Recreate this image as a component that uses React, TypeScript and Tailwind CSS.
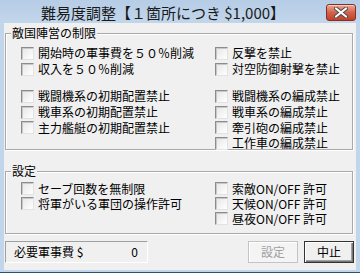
const font = { fontFamily: '"Noto Sans CJK JP", "Noto Sans", sans-serif' }

function Check({ label }: { label: string }) {
  return (
    <div className="flex h-full items-center">
      <span className="w-[13px] h-[13px] shrink-0 border border-t-[#8c8c8c] border-l-[#8c8c8c] border-b-[#e2e2e2] border-r-[#e2e2e2] bg-gradient-to-br from-[#e6e6e6] to-white shadow-[inset_1px_1px_0_#c8c8c8]" />
      <span className="ml-[4px] whitespace-nowrap text-[12px] leading-none text-black">{label}</span>
    </div>
  )
}

function Group({ title, className, children }: { title: string; className: string; children: React.ReactNode }) {
  return (
    <div className={`relative ml-[1px] w-[348px] border border-[#a9a9a9] shadow-[inset_1px_1px_0_#fff,1px_1px_0_#fff] ${className}`}>
      <span className="absolute -top-[9px] left-[5px] px-[1px] bg-[#f0f0f0] text-[12px] leading-[16px] text-black">{title}</span>
      {children}
    </div>
  )
}

export default function App() {
  return (
    <div className="w-[360px] h-[273px] flex flex-col bg-[#c2d6eb] border-b border-[#2d5267] select-none" style={font}>
      {/* title bar */}
      <div className="h-[23px] flex shrink-0 bg-gradient-to-b from-[#b6cde6] to-[#c2d6eb]">
        <div className="flex-1 flex items-center justify-center pt-[2px] text-[15px] leading-none text-[#1a1a1a] whitespace-nowrap">
          難易度調整【１箇所につき $1,000】
        </div>
        <button className="mt-[4px] mr-[4px] w-[30px] h-[17px] rounded-[3px] border border-[#8a2d1f] bg-gradient-to-b from-[#e8a796] via-[#d4624b] to-[#c0402a] flex items-center justify-center shadow-[inset_0_1px_0_#f3cfc5]">
          <svg width="14" height="11" viewBox="0 0 14 11">
            <path d="M2 1.5 L12 9.5 M12 1.5 L2 9.5" stroke="#4a4a4a" strokeWidth="4" strokeLinecap="round" />
            <path d="M2 1.5 L12 9.5 M12 1.5 L2 9.5" stroke="#ffffff" strokeWidth="2.2" strokeLinecap="round" />
          </svg>
        </button>
      </div>

      {/* client */}
      <div className="mx-[4px] h-[247px] flex flex-col bg-[#f0f0f0] pt-[10px]">
        <Group title="敵国陣営の制限" className="h-[117px] pt-[11px] pl-[15px]">
          <div className="grid grid-cols-[194px_1fr] grid-rows-[16px_16px_11px_16px_16px_15px_16px]">
            <Check label="開始時の軍事費を５０％削減" />
            <Check label="反撃を禁止" />
            <Check label="収入を５０％削減" />
            <Check label="対空防御射撃を禁止" />
            <div />
            <div />
            <Check label="戦闘機系の初期配置禁止" />
            <Check label="戦闘機系の編成禁止" />
            <Check label="戦車系の初期配置禁止" />
            <Check label="戦車系の編成禁止" />
            <Check label="主力艦艇の初期配置禁止" />
            <Check label="牽引砲の編成禁止" />
            <div />
            <Check label="工作車の編成禁止" />
          </div>
        </Group>

        <Group title="設定" className="mt-[21px] h-[63px] pt-[9px] pl-[15px]">
          <div className="grid grid-cols-[194px_1fr] grid-rows-[15px_15px_15px]">
            <Check label="セーブ回数を無制限" />
            <Check label="索敵ON/OFF 許可" />
            <Check label="将軍がいる軍団の操作許可" />
            <Check label="天候ON/OFF 許可" />
            <div />
            <Check label="昼夜ON/OFF 許可" />
          </div>
        </Group>

        <div className="mt-[7px] flex h-[22px]">
          <div className="ml-[1px] w-[143px] flex items-center justify-between pl-[8px] pr-[9px] border border-t-[#a0a0a0] border-l-[#a0a0a0] border-b-white border-r-white text-[12px] leading-none text-black">
            <span>必要軍事費 $</span>
            <span>0</span>
          </div>
          <button disabled className="ml-auto w-[50px] h-[22px] border border-[#c4c4c4] bg-[#f4f4f4] shadow-[inset_1px_1px_0_#fff] text-[12px] leading-none text-[#a0a0a0]">
            設定
          </button>
          <button className="ml-[6px] mr-[2px] w-[50px] h-[22px] border border-[#333] bg-[#f0f0f0] shadow-[inset_1px_1px_0_#fff,inset_-1px_-1px_0_#777,inset_-2px_-2px_0_#a0a0a0] text-[12px] leading-none text-black">
            中止
          </button>
        </div>
      </div>
    </div>
  )
}
